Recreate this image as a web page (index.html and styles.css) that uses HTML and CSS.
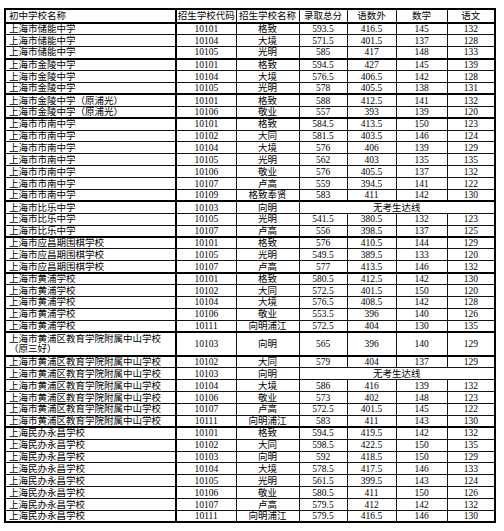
FILE: index.html
```html
<!DOCTYPE html>
<html lang="zh-CN">
<head>
<meta charset="utf-8">
<title>招生学校录取分数</title>
<link rel="stylesheet" href="styles.css">
</head>
<body>
<div class="sheet">
<table class="grid">
<colgroup>
<col class="c1"><col class="c2"><col class="c3"><col class="c4"><col class="c5"><col class="c6"><col class="c7">
</colgroup>
<thead>
<tr class="head"><th class="name">初中学校名称</th><th>招生学校代码</th><th>招生学校名称</th><th>录取总分</th><th>语数外</th><th>数学</th><th>语文</th></tr>
</thead>
<tbody>
<tr class="g"><td class="name">上海市储能中学</td><td>10101</td><td>格致</td><td>593.5</td><td>416.5</td><td>145</td><td>132</td></tr>
<tr><td class="name">上海市储能中学</td><td>10104</td><td>大境</td><td>571.5</td><td>401.5</td><td>137</td><td>128</td></tr>
<tr><td class="name">上海市储能中学</td><td>10105</td><td>光明</td><td>585</td><td>417</td><td>148</td><td>133</td></tr>
<tr class="g"><td class="name">上海市金陵中学</td><td>10101</td><td>格致</td><td>594.5</td><td>427</td><td>145</td><td>139</td></tr>
<tr><td class="name">上海市金陵中学</td><td>10104</td><td>大境</td><td>576.5</td><td>406.5</td><td>142</td><td>128</td></tr>
<tr><td class="name">上海市金陵中学</td><td>10105</td><td>光明</td><td>578</td><td>405.5</td><td>138</td><td>131</td></tr>
<tr class="g"><td class="name">上海市金陵中学（原浦光）</td><td>10101</td><td>格致</td><td>588</td><td>412.5</td><td>141</td><td>132</td></tr>
<tr><td class="name">上海市金陵中学（原浦光）</td><td>10106</td><td>敬业</td><td>557</td><td>393</td><td>139</td><td>120</td></tr>
<tr class="g"><td class="name">上海市市南中学</td><td>10101</td><td>格致</td><td>584.5</td><td>413.5</td><td>150</td><td>123</td></tr>
<tr><td class="name">上海市市南中学</td><td>10102</td><td>大同</td><td>581.5</td><td>403.5</td><td>146</td><td>124</td></tr>
<tr><td class="name">上海市市南中学</td><td>10104</td><td>大境</td><td>576</td><td>406</td><td>139</td><td>129</td></tr>
<tr><td class="name">上海市市南中学</td><td>10105</td><td>光明</td><td>562</td><td>403</td><td>135</td><td>135</td></tr>
<tr><td class="name">上海市市南中学</td><td>10106</td><td>敬业</td><td>576</td><td>405.5</td><td>137</td><td>132</td></tr>
<tr><td class="name">上海市市南中学</td><td>10107</td><td>卢高</td><td>559</td><td>394.5</td><td>141</td><td>122</td></tr>
<tr><td class="name">上海市市南中学</td><td>10109</td><td>格致奉贤</td><td>583</td><td>411</td><td>142</td><td>130</td></tr>
<tr class="g"><td class="name">上海市比乐中学</td><td>10103</td><td>向明</td><td colspan="4">无考生达线</td></tr>
<tr><td class="name">上海市比乐中学</td><td>10105</td><td>光明</td><td>541.5</td><td>380.5</td><td>132</td><td>123</td></tr>
<tr><td class="name">上海市比乐中学</td><td>10107</td><td>卢高</td><td>556</td><td>398.5</td><td>137</td><td>125</td></tr>
<tr class="g"><td class="name">上海市应昌期围棋学校</td><td>10101</td><td>格致</td><td>576</td><td>410.5</td><td>144</td><td>129</td></tr>
<tr><td class="name">上海市应昌期围棋学校</td><td>10105</td><td>光明</td><td>549.5</td><td>389.5</td><td>133</td><td>120</td></tr>
<tr><td class="name">上海市应昌期围棋学校</td><td>10107</td><td>卢高</td><td>577</td><td>413.5</td><td>146</td><td>132</td></tr>
<tr class="g"><td class="name">上海市黄浦学校</td><td>10101</td><td>格致</td><td>580.5</td><td>412.5</td><td>142</td><td>130</td></tr>
<tr><td class="name">上海市黄浦学校</td><td>10102</td><td>大同</td><td>572.5</td><td>401.5</td><td>150</td><td>120</td></tr>
<tr><td class="name">上海市黄浦学校</td><td>10104</td><td>大境</td><td>576.5</td><td>408.5</td><td>142</td><td>128</td></tr>
<tr><td class="name">上海市黄浦学校</td><td>10106</td><td>敬业</td><td>553.5</td><td>396</td><td>140</td><td>126</td></tr>
<tr><td class="name">上海市黄浦学校</td><td>10111</td><td>向明浦江</td><td>572.5</td><td>404</td><td>130</td><td>135</td></tr>
<tr class="g tall"><td class="name wrap">上海市黄浦区教育学院附属中山学校<br>（原三好）</td><td>10103</td><td>向明</td><td>565</td><td>396</td><td>140</td><td>129</td></tr>
<tr class="g"><td class="name">上海市黄浦区教育学院附属中山学校</td><td>10102</td><td>大同</td><td>579</td><td>404</td><td>137</td><td>129</td></tr>
<tr><td class="name">上海市黄浦区教育学院附属中山学校</td><td>10103</td><td>向明</td><td colspan="4">无考生达线</td></tr>
<tr><td class="name">上海市黄浦区教育学院附属中山学校</td><td>10104</td><td>大境</td><td>586</td><td>416</td><td>139</td><td>132</td></tr>
<tr><td class="name">上海市黄浦区教育学院附属中山学校</td><td>10106</td><td>敬业</td><td>573</td><td>402</td><td>148</td><td>123</td></tr>
<tr><td class="name">上海市黄浦区教育学院附属中山学校</td><td>10107</td><td>卢高</td><td>572.5</td><td>401.5</td><td>145</td><td>122</td></tr>
<tr><td class="name">上海市黄浦区教育学院附属中山学校</td><td>10111</td><td>向明浦江</td><td>583</td><td>411</td><td>143</td><td>130</td></tr>
<tr class="g"><td class="name">上海民办永昌学校</td><td>10101</td><td>格致</td><td>594.5</td><td>419.5</td><td>142</td><td>132</td></tr>
<tr><td class="name">上海民办永昌学校</td><td>10102</td><td>大同</td><td>598.5</td><td>422.5</td><td>150</td><td>135</td></tr>
<tr><td class="name">上海民办永昌学校</td><td>10103</td><td>向明</td><td>592</td><td>418.5</td><td>150</td><td>129</td></tr>
<tr><td class="name">上海民办永昌学校</td><td>10104</td><td>大境</td><td>578.5</td><td>417.5</td><td>146</td><td>133</td></tr>
<tr><td class="name">上海民办永昌学校</td><td>10105</td><td>光明</td><td>561.5</td><td>399.5</td><td>143</td><td>124</td></tr>
<tr><td class="name">上海民办永昌学校</td><td>10106</td><td>敬业</td><td>580.5</td><td>411</td><td>150</td><td>126</td></tr>
<tr><td class="name">上海民办永昌学校</td><td>10107</td><td>卢高</td><td>579.5</td><td>412</td><td>142</td><td>132</td></tr>
<tr><td class="name">上海民办永昌学校</td><td>10111</td><td>向明浦江</td><td>579.5</td><td>416.5</td><td>146</td><td>130</td></tr>
</tbody>
</table>
</div>
</body>
</html>
```

FILE: styles.css
```css
html, body {
  margin: 0;
  padding: 0;
  background: #ffffff;
}

.sheet {
  padding: 8px 0 0 4px;
}

.grid {
  border-collapse: collapse;
  table-layout: fixed;
  width: 490px;
  border: 2px solid #000;
  font-family: "Liberation Serif", "Noto Sans CJK SC", serif;
  font-size: 9.5px;
  line-height: 10px;
  color: #000;
}

.c1 { width: 171px; }
.c2 { width: 60px; }
.c3 { width: 63px; }
.c4 { width: 48px; }
.c5 { width: 49px; }
.c6 { width: 51px; }
.c7 { width: 48px; }

.grid th,
.grid td {
  border: 1px solid #111;
  padding: 0;
  text-align: center;
  vertical-align: middle;
  white-space: nowrap;
  overflow: hidden;
  font-weight: normal;
}

.grid tbody tr {
  height: 11.9px;
}

.grid .head {
  height: 14px;
}

.grid .head th {
  border-bottom: 2px solid #000;
}

.grid .name {
  text-align: left;
  padding-left: 3px;
  border-right: 2px solid #000;
}

.grid tr.g td {
  border-top: 2px solid #000;
}

.grid tbody tr.tall {
  height: 23.8px;
}

.grid .wrap {
  white-space: normal;
  line-height: 10.5px;
}
```
